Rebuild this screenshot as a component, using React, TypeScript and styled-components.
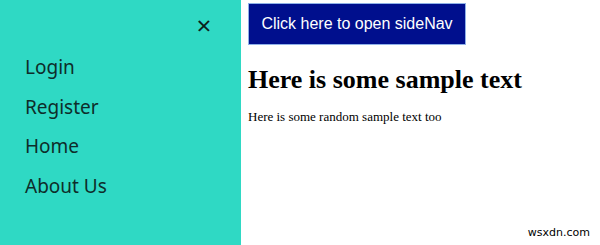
import React from 'react';
import styled, { createGlobalStyle } from 'styled-components';

const GlobalStyle = createGlobalStyle`
  html, body {
    margin: 0;
    padding: 0;
    background: #ffffff;
  }
  body {
    font-family: "Liberation Serif", "Times New Roman", serif;
  }
`;

const Page = styled.div`
  display: flex;
  height: 245px;
  overflow: hidden;
  position: relative;
`;

const SideNav = styled.nav`
  width: 241px;
  flex-shrink: 0;
  background: #2fd9c4;
  display: flex;
  flex-direction: column;
  padding-top: 12px;
  box-sizing: border-box;
`;

const CloseButton = styled.button`
  align-self: flex-end;
  margin-right: 27px;
  background: none;
  border: none;
  padding: 0;
  width: 20px;
  height: 26px;
  color: #0b1f1d;
  font-family: "Noto Sans", sans-serif;
  font-size: 26px;
  line-height: 26px;
  cursor: pointer;
`;

const NavList = styled.div`
  display: flex;
  flex-direction: column;
  gap: 11px;
  margin-top: 15px;
`;

const NavLink = styled.a`
  display: block;
  padding-left: 25px;
  height: 28.5px;
  line-height: 28px;
  font-family: "Noto Sans", "Open Sans", sans-serif;
  font-size: 19px;
  color: #0e2d2a;
  text-decoration: none;
`;

const Main = styled.main`
  flex: 1;
  padding: 3px 0 0 7px;
`;

const OpenButton = styled.button`
  height: 42px;
  width: 218px;
  background: #000f8d;
  border: 1px solid #8fb1e8;
  color: #ffffff;
  font-family: "Liberation Sans", Arial, sans-serif;
  font-size: 16px;
  padding: 0;
  cursor: pointer;
`;

const Heading = styled.h2`
  margin: 20px 0 0;
  font-size: 26px;
  line-height: 30px;
  font-weight: bold;
  color: #000000;
`;

const Text = styled.p`
  margin: 14px 0 0;
  font-size: 13px;
  color: #000000;
`;

const Watermark = styled.span`
  position: absolute;
  right: 10px;
  bottom: 6px;
  font-family: "DejaVu Sans", sans-serif;
  font-size: 11px;
  color: #000000;
`;

export default function App() {
  return (
    <>
      <GlobalStyle />
      <Page>
        <SideNav>
          <CloseButton aria-label="Close">×</CloseButton>
          <NavList>
            <NavLink href="#">Login</NavLink>
            <NavLink href="#">Register</NavLink>
            <NavLink href="#">Home</NavLink>
            <NavLink href="#">About Us</NavLink>
          </NavList>
        </SideNav>
        <Main>
          <OpenButton>Click here to open sideNav</OpenButton>
          <Heading>Here is some sample text</Heading>
          <Text>Here is some random sample text too</Text>
        </Main>
        <Watermark>wsxdn.com</Watermark>
      </Page>
    </>
  );
}
